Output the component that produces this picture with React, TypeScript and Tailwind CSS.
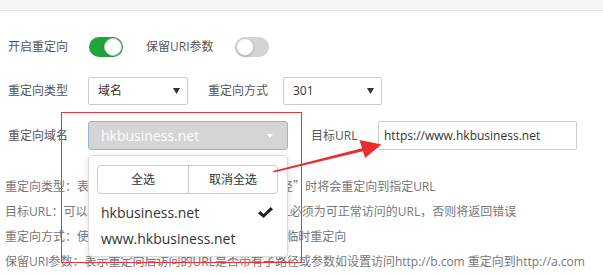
import React from 'react';

const font = "font-['Open_Sans','Noto_Sans_CJK_SC',sans-serif]";

const Toggle = ({ on }: { on: boolean }) => (
  <div
    className={
      on
        ? 'w-[34px] h-[20px] rounded-full bg-[#20a53a] p-[1px] flex justify-end'
        : 'w-[34px] h-[20px] rounded-full bg-[#d4d4d4] p-[1px] flex justify-start'
    }
  >
    <div className="w-[18px] h-[18px] rounded-full bg-white border border-[#c8c8c8] shadow-[0_1px_2px_rgba(0,0,0,0.2)]" />
  </div>
);

const Caret = ({ color = '#333' }: { color?: string }) => (
  <svg width="7" height="6" viewBox="0 0 7 6">
    <polygon points="0,0 7,0 3.5,6" fill={color} />
  </svg>
);

const Select = ({ value, width }: { value: string; width: string }) => (
  <div
    className={`${width} h-[28px] border border-[#ccc] rounded-[2px] bg-white flex items-center justify-between pl-[9px] pr-[7px] text-[12px] text-[#333]`}
  >
    <span>{value}</span>
    <Caret />
  </div>
);

// full-width quotes come from the CJK font
const Q = ({ children }: { children: string }) => (
  <span className="font-['Noto_Sans_CJK_SC',sans-serif]">{children}</span>
);

const App = () => {
  return (
    <div className={`relative w-[603px] h-[274px] overflow-hidden bg-white ${font}`}>
      <div className="h-[11px] bg-[#f6f6f6] border-b border-[#e5e5e5]" />

      <div className="pl-[8px] pt-[26px]">
        <div className="flex items-center h-[20px]">
          <span className="w-[81px] text-[12px] text-[#555]">开启重定向</span>
          <Toggle on />
          <span className="ml-[23px] w-[89px] text-[12px] text-[#555]">保留URI参数</span>
          <Toggle on={false} />
        </div>

        <div className="mt-[20px] flex items-center">
          <span className="w-[80px] text-[12px] text-[#555]">重定向类型</span>
          <Select value="域名" width="w-[100px]" />
          <span className="ml-[20px] w-[75px] text-[12px] text-[#555]">重定向方式</span>
          <Select value="301" width="w-[99px]" />
        </div>

        <div className="mt-[16px] flex items-center">
          <span className="w-[80px] text-[12px] text-[#555]">重定向域名</span>
          <div className="relative w-[200px] h-[29px]">
            <div className="h-full bg-[#d5d5d5] border border-[#8db3e8] rounded-[3px] flex items-center justify-between pl-[12px] pr-[14px] text-[14px] text-white">
              <span>hkbusiness.net</span>
              <svg width="6" height="4" viewBox="0 0 6 4">
                <polygon points="0,0 6,0 3,4" fill="#fff" />
              </svg>
            </div>

            <div className="absolute left-0 top-[34px] z-10 w-[200px] h-[102px] bg-white border border-[#dcdcdc] rounded-[4px] shadow-[0_2px_6px_rgba(0,0,0,0.12)] pt-[9px] pl-[8px] pr-[9px]">
              <div className="flex h-[29px] border border-[#ccc] rounded-[4px] text-[12px] text-[#333]">
                <div className="w-[91px] flex items-center justify-center border-r border-[#ccc]">全选</div>
                <div className="flex-1 flex items-center justify-center">取消全选</div>
              </div>
              <div className="mt-[5px] h-[26px] flex items-center justify-between pl-[4px] pr-[5px] text-[14px] text-[#333]">
                <span>hkbusiness.net</span>
                <svg width="15" height="11" viewBox="0 0 15 11">
                  <polygon points="0,6.2 2.4,4 5.6,7 12.6,0 15,2.3 5.6,11" fill="#222" />
                </svg>
              </div>
              <div className="h-[26px] flex items-center pl-[4px] text-[14px] text-[#333]">
                <span>www.hkbusiness.net</span>
              </div>
            </div>
          </div>
          <span className="ml-[23px] w-[67px] text-[12px] text-[#555]">目标URL</span>
          <div className="w-[199px] h-[29px] border border-[#ccc] rounded-[2px] flex items-center pl-[5px] text-[12px] text-[#333]">
            https://www.hkbusiness.net
          </div>
        </div>
      </div>

      <div className="mt-[23px] pl-[5px] text-[12px] leading-[25px] text-[#777] whitespace-nowrap">
        <div>
          重定向类型：表示访问选择的<Q>“</Q>域名<Q>”</Q>或输入的<Q>“</Q>路径<Q>”</Q>时将会重定向到指定URL
        </div>
        <div>目标URL：可以填写你需要重定向到的站点，目标URL必须为可正常访问的URL，否则将返回错误</div>
        <div>重定向方式：使用301表示永久重定向，使用302表示临时重定向</div>
        <div>保留URI参数：表示重定向后访问的URL是否带有子路径或参数如设置访问http://b.com 重定向到http://a.com</div>
      </div>

      <div className="absolute left-[61px] top-[112px] w-[241px] h-[151px] border border-[#e8343a] z-20 pointer-events-none" />

      <svg className="absolute left-0 top-0 z-30 pointer-events-none" width="603" height="274" viewBox="0 0 603 274">
        <polygon
          points="273,171 362,148.3 359.5,140 381.5,144.5 365,158 363,151.3 273.5,172.5"
          fill="#ec2c2c"
        />
      </svg>
    </div>
  );
};

export default App;
